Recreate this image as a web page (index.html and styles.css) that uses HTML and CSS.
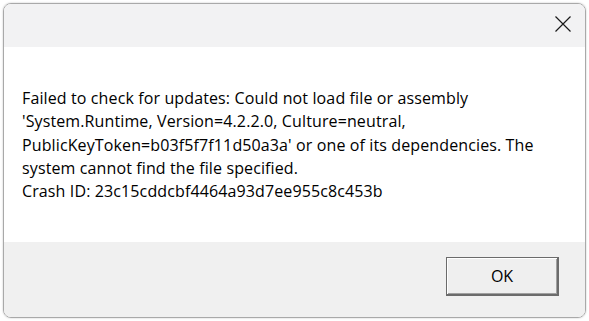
FILE: index.html
```html
<!DOCTYPE html>
<html lang="en">
<head>
  <meta charset="UTF-8">
  <title>Update error</title>
  <link rel="stylesheet" href="styles.css">
</head>
<body>
  <div class="dialog">
    <div class="titlebar">
      <button class="close" aria-label="Close">
        <svg width="16" height="16" viewBox="0 0 16 16">
          <path d="M0.5 0.5 L15.5 15.5 M15.5 0.5 L0.5 15.5" stroke="#1a1a1a" stroke-width="1.2" fill="none"/>
        </svg>
      </button>
    </div>

    <div class="content">
      <p class="message">
        Failed to check for updates: Could not load file or assembly<br>
        'System.Runtime, Version=4.2.2.0, Culture=neutral,<br>
        PublicKeyToken=b03f5f7f11d50a3a' or one of its dependencies. The<br>
        system cannot find the file specified.<br>
        Crash ID: 23c15cddcbf4464a93d7ee955c8c453b
      </p>
    </div>

    <div class="footer">
      <button class="ok">OK</button>
    </div>
  </div>
</body>
</html>
```

FILE: styles.css
```css
/* Page */
html, body {
  margin: 0;
  padding: 0;
  background-color: #ffffff;
}

body {
  padding: 3px;
  font-family: 'Open Sans', 'Noto Sans', sans-serif;
}

/* Dialog window */
.dialog {
  width: 583px;
  height: 315px;
  box-sizing: border-box;
  border: 1px solid #a9a9a9;
  border-radius: 8px;
  overflow: hidden;
  display: flex;
  flex-direction: column;
  box-shadow: 0 0 2px rgba(0, 0, 0, 0.25);
}

.titlebar {
  height: 43px;
  background-color: #f2f2f3;
  display: flex;
  justify-content: flex-end;
  align-items: flex-start;
}

.close {
  width: 46px;
  height: 40px;
  padding: 0;
  border: none;
  background: transparent;
  display: flex;
  align-items: center;
  justify-content: center;
  margin-right: -1px;
}

.content {
  height: 195px;
  background-color: #ffffff;
  padding: 40px 0 0 18px;
  box-sizing: border-box;
}

.message {
  margin: 0;
  font-size: 16px;
  letter-spacing: 0.12px;
  line-height: 23.25px;
  color: #000000;
}

.footer {
  flex: 1;
  background-color: #f0f0f0;
  display: flex;
  justify-content: flex-end;
  align-items: flex-start;
  padding: 15px 26px 0 0;
}

.ok {
  width: 113px;
  height: 39px;
  font-family: 'Open Sans', 'Noto Sans', sans-serif;
  font-size: 16px;
  color: #000000;
  background-color: #efefef;
  border: 1px solid #6b6b6b;
  border-right-width: 2px;
  border-bottom-width: 2px;
  box-shadow: inset 1px 1px #ffffff, inset -1px -1px #a0a0a0;
  padding: 0;
}
```
